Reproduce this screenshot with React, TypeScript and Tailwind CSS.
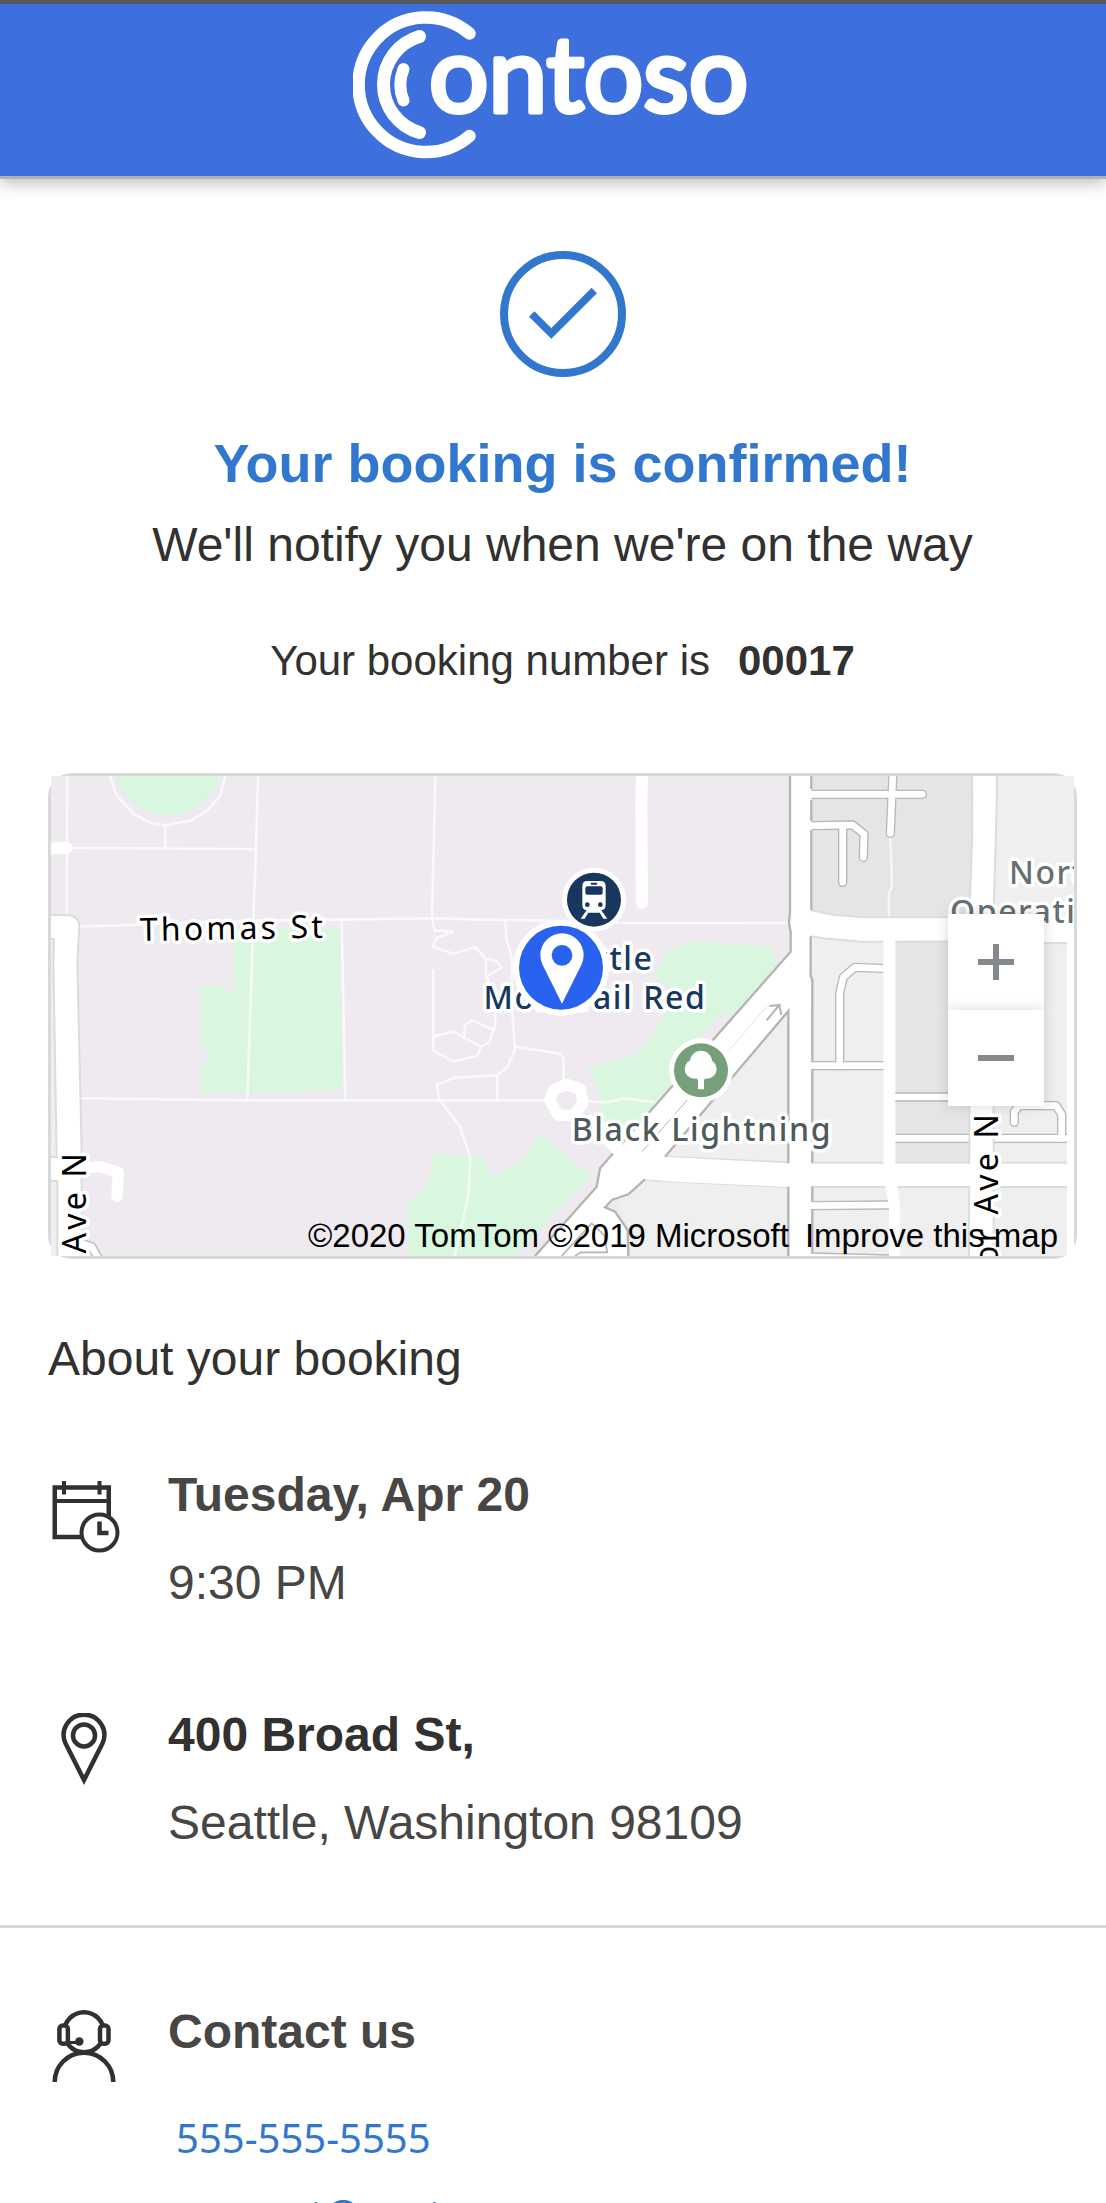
import type { ReactNode } from "react";

function Logo() {
  return (
    <svg viewBox="0 0 400 148" className="h-[148px] w-[400px]" role="img" aria-label="Contoso">
      <g fill="none" stroke="#fff" strokeLinecap="round">
        <path strokeWidth="12.5" d="M116.5 22.5A67.3 67.3 0 1 0 116.5 125" />
        <path strokeWidth="13" d="M66.5 25.500A50 50 0 0 0 66.500 121.500" />
        <path strokeWidth="12" d="M50.500 58A42 42 0 0 0 50.500 89.500" />
      </g>
      <text
        x="76"
        y="101"
        fill="#fff"
        stroke="#fff"
        strokeWidth="5"
        strokeLinejoin="round"
        className="font-['Lato',sans-serif] text-[105px] font-normal"
      >
        ontoso
      </text>
    </svg>
  );
}

function CheckIcon() {
  return (
    <svg viewBox="0 0 126 126" className="size-[126px]" fill="none" stroke="#3277ce" aria-hidden="true">
      <circle cx="63" cy="63" r="59" strokeWidth="8" />
      <path d="M31.700 63L51.300 82.500L94.300 39.500" strokeWidth="7.500" />
    </svg>
  );
}

function CalendarIcon() {
  return (
    <svg viewBox="0 0 72 72" className="size-[72px]" fill="none" stroke="#323130" strokeWidth="4.500" aria-hidden="true">
      <path d="M6.750 6.600H60.750V56H6.750Z" />
      <path d="M6.750 20H60.750" strokeWidth="4" />
      <path d="M16 0V13.500M51.500 0V13.500" strokeWidth="4" />
      <circle cx="51.500" cy="51.500" r="18" fill="#fff" strokeWidth="4" />
      <path d="M51.500 40.500V52H60.500" />
    </svg>
  );
}

function PinIcon() {
  return (
    <svg viewBox="0 0 72 72" className="size-[72px]" fill="none" stroke="#323130" strokeWidth="4.500" aria-hidden="true">
      <path d="M17.600 30.500L36 67L54.400 30.500A20.300 20.300 0 1 0 17.600 30.500Z" strokeMiterlimit="10" />
      <circle cx="36" cy="22.400" r="11" />
    </svg>
  );
}

function AgentIcon() {
  return (
    <svg viewBox="0 0 72 72" className="size-[72px]" fill="none" stroke="#323130" strokeWidth="4.500" aria-hidden="true">
      <circle cx="36" cy="22.300" r="20" />
      <rect x="11.400" y="15.500" width="8.500" height="18.300" rx="3.500" fill="#fff" />
      <rect x="52" y="15.500" width="8.500" height="18.300" rx="3.500" fill="#fff" />
      <path d="M18 32.500H31" strokeWidth="3" />
      <circle cx="31.300" cy="31.500" r="4.300" fill="#323130" stroke="none" />
      <path d="M6.700 72A29.300 29.300 0 0 1 65.300 72" />
    </svg>
  );
}

const ALLEYS = [
  "M2315 88H2647",
  "M2559 20L2551 205",
  "M2315 182L2438 180L2472 207L2470 277",
  "M2408 182V352",
  "M2545 611L2445 607L2410 637L2399 685V902",
  "M2315 902H2545",
  "M2560 996H2795",
  "M2560 1120H2795",
  "M2860 1120H3085",
  "M2923 1072V1040L2938 1022H3048L3065 1048V1120",
  "M2315 1322L2545 1320",
  "M2315 1476L2545 1482",
  "M130 1437L155 1445L178 1485",
];

const PATHS = [
  "M82 33L80 450",
  "M210 33L230 92L285 150L335 174L376 181L455 166L505 134L540 92L557 33",
  "M376 181V249",
  "M95 249L648 252",
  "M654 33L648 252L640 470L622 1006",
  "M118 485L640 467L1180 460L1300 463L1520 467L1760 474L2250 475",
  "M905 462L916 1006",
  "M118 1000L622 1006H1520",
  "M1186 33L1176 460L1184 497L1240 500L1190 518L1180 546L1240 566L1306 546L1338 582V635L1385 608L1370 588L1338 582",
  "M1338 635L1364 690L1366 780L1348 832L1322 845L1312 872L1242 890L1180 857V612",
  "M1180 815L1240 800L1322 845",
  "M1270 822L1276 780L1296 766L1362 796",
  "M1395 462L1400 525L1416 580V720L1424 845V855L1402 906L1372 931L1242 938L1190 960L1198 1004L1260 1085L1291 1178L1285 1293L1244 1473",
  "M1372 931V1006",
  "M1424 845L1560 866L1571 880V950",
  "M1630 1008L1695 1012L1755 1000L1850 1012",
];

/* Street map artwork; geometry is on a 3x grid, labels are in map pixels. */
function StreetMap() {
  return (
    <svg
      viewBox="0 0 1023 480"
      preserveAspectRatio="xMidYMid slice"
      className="block h-[480px] w-full"
      role="img"
      aria-label="Map of 400 Broad St, Seattle"
    >
      <g transform="scale(0.33333) translate(-33 -33)">
        <rect x="33" y="33" width="3072" height="1443" fill="#efeaf0" />

        <g fill="#d9f6df">
          <path d="M224 33C250 105 310 150 384 150S518 105 541 33Z" />
          <path d="M580 490H900L906 975L700 980L483 984V888H503V857H483V690H474V663H558V680H580Z" />
          <path d="M1885 555L1950 528L2200 545L2210 600L1900 960L1800 1080H1680L1677 990L1665 940L1640 912L1790 866L1862 775L1880 730L1905 680L1845 630Z" />
          <path d="M1497 1102L1652 1234L1420 1473H1104V1306L1130 1295L1160 1262L1177 1215L1172 1165L1330 1178L1356 1238L1458 1178Z" />
        </g>
        <path d="M2050 742L2070 760L2005 830L1970 855L1965 830Z" fill="#efeaf0" />

        <path d="M2250 33H3105V1476H1740V1240L2250 690Z" fill="#efefef" />
        <path d="M2315 33H2795V460H2315ZM2567 530H2790V1190H2567Z" fill="#e5e5e5" />

        <g fill="none" stroke="#fff" strokeOpacity="0.65" strokeWidth="8" strokeLinejoin="round">
          {PATHS.map((d) => (
            <path key={d} d={d} />
          ))}
          <path d="M2551 215L2556 365L2547 382V460" />
        </g>

        <path d="M33 520H42L54 1476H33Z" fill="#efefef" />
        <path
          d="M20 450H82Q118 452 118 488L112 590L125 1160V1490H52V1248H20V1176H50L40 590L42 522H20Z"
          fill="#fff"
          stroke="#d9dddc"
          strokeWidth="6"
        />
        <path d="M20 251L80 248" stroke="#fff" strokeWidth="36" strokeLinecap="round" />
        <path
          d="M90 1212L180 1205L235 1222L231 1294"
          fill="none"
          stroke="#fff"
          strokeWidth="34"
          strokeLinecap="round"
          strokeLinejoin="round"
        />
        <path d="M1806 20L1804 120L1806 414" fill="none" stroke="#fff" strokeWidth="36" strokeLinecap="round" />

        <g fill="none" strokeLinecap="round" strokeLinejoin="round">
          <g stroke="#b8b8b8" strokeWidth="28">
            {ALLEYS.map((d) => (
              <path key={d} d={d} />
            ))}
          </g>
          <g stroke="#fff" strokeWidth="20">
            {ALLEYS.map((d) => (
              <path key={d} d={d} />
            ))}
          </g>
        </g>

        {/* avenues and cross streets */}
        <g fill="#fff" stroke="#d9dddc" strokeWidth="6">
          <path d="M2796 20H2871V90L2861 430H2789L2797 200Z" />
          <path d="M2790 520H2861V1490H2787Z" />
        </g>
        <g fill="none" stroke="#d9dddc" strokeWidth="6">
          <path d="M2310 435L2380 450L2470 457L3105 458" />
          <path d="M2310 512L2350 520L2470 530L2790 529L3105 535" />
          <path d="M1880 1175L2250 1193H3105M1815 1243L1850 1247L2250 1266H3105" />
        </g>
        <path d="M2250 440L2310 438L2380 453L2470 460H3105V532L2790 526L2470 527L2350 517L2310 509H2250Z" fill="#fff" />
        <path d="M2791 435H2859V545H2791ZM2791 1180H2857V1280H2791Z" fill="#fff" />
        <path d="M1880 1178L2250 1196H3105V1263H2250L1850 1244Z" fill="#fff" />
        <path d="M2530 520H2566V1263H2572L2580 1320V1490H2547V1320L2535 1263H2530Z" fill="#fff" />
        <path d="M3081 530H3105V1476H3081Z" fill="#fff" />

        {/* diagonal arterial */}
        <path
          d="M2252 560L1680 1210L1670 1265L1485 1476H1765L1763 1395L1725 1340L1695 1327L1717 1304L1765 1288L1815 1243L1900 1250L2245 1266V1195L1875 1175L2247 738H2315V33H2252Z"
          fill="#fff"
        />
        <path d="M2248 700H2314V1476H2248Z" fill="#fff" />
        <g fill="none" stroke="#b4b4b4" strokeWidth="7">
          <path d="M2250 33V440L2247 475L2252 500V560L1680 1210L1670 1265L1485 1473" />
          <path d="M2245 1195V738L1875 1175M2245 1266V1476" />
          <path d="M1765 1473L1763 1395L1725 1340L1695 1327L1717 1304L1765 1288L1815 1243" />
          <path d="M2314 33V72M2314 104V168M2314 196V436M2312 514V632L2317 645V890M2317 914V1194M2317 1264V1308M2317 1334V1465" />
          <path d="M1565 1473L1655 1375L1692 1410L1702 1462H1622L1605 1473" strokeWidth="5" />
          <path d="M2180 766L2218 720L2188 723M2218 720L2224 750" strokeWidth="6" />
          <path d="M1806 1160L1942 1005M1742 1138L1775 1100" strokeWidth="3" />
          <path d="M2064 860L2180 725" stroke="#d4d4d4" strokeWidth="2" />
        </g>
        <path d="M1640 1060L1760 1180" stroke="#fff" strokeWidth="38" />
        <path d="M1580 958L1622 974L1629 1015L1600 1052L1555 1050L1529 1006L1540 975Z" fill="none" stroke="#fff" strokeWidth="34" strokeLinejoin="round" />
      </g>

      {/* labels */}
      <g
        stroke="#fff"
        strokeWidth="7"
        strokeLinejoin="round"
        paintOrder="stroke"
        className="font-['Noto_Sans',sans-serif] text-[32px] tracking-wider"
      >
        <g fill="#000" stroke="#fff" className="tracking-widest">
          <text x="89" y="165" transform="rotate(-1 89 165)">Thomas St</text>
          <text transform="translate(35 374) rotate(-90)" textAnchor="end">1st Ave N</text>
          <text transform="translate(947 335) rotate(-90)" textAnchor="end">Taylor Ave N</text>
        </g>
        <g className="font-medium">
          <g fill="#17375e" textAnchor="middle">
            <text x="544" y="194">Seattle</text>
            <text x="544" y="233">Monorail Red</text>
          </g>
          <text x="651" y="365" textAnchor="middle" fill="#4e5a5c">Black Lightning</text>
          <g fill="#667073">
            <text x="958" y="108">North</text>
            <text x="899" y="147">Operations</text>
          </g>
        </g>
      </g>

      {/* points of interest */}
      <g transform="scale(0.33333) translate(-33 -33)">
        <circle cx="1662" cy="404" r="96" fill="#fff" />
        <circle cx="1662" cy="404" r="81" fill="#17375e" />
        <path d="M1642 348H1682Q1697 348 1697 364V420Q1697 434 1684 436L1702 461H1690L1679 443H1645L1634 461H1622L1640 436Q1627 434 1627 420V364Q1627 348 1642 348Z" fill="#fff" />
        <rect x="1652" y="353" width="20" height="6" rx="3" fill="#17375e" />
        <rect x="1636" y="364" width="52" height="25" rx="6" fill="#17375e" />
        <circle cx="1642" cy="419" r="7" fill="#17375e" />
        <circle cx="1681" cy="419" r="7" fill="#17375e" />

        <circle cx="1983" cy="916" r="96" fill="#fff" />
        <circle cx="1983" cy="916" r="81" fill="#75a079" />
        <g fill="#fff">
          <circle cx="1983" cy="890" r="33" />
          <circle cx="1963" cy="912" r="29" />
          <circle cx="2001" cy="912" r="29" />
          <path d="M1960 930H2006L1992 945V973H1974V945Z" />
        </g>

        <circle cx="1563" cy="608" r="144" fill="#fff" />
        <circle cx="1563" cy="608" r="126" fill="#2962ef" />
        <path d="M1566 716L1508 600Q1501 586 1501 570A65 65 0 0 1 1631 570Q1631 586 1624 600Z" fill="#fff" />
        <circle cx="1566" cy="571" r="31" fill="#2962ef" />
      </g>
    </svg>
  );
}

function MapCard() {
  return (
    <section
      aria-label="Map"
      className="relative mt-[84px] w-full rounded-3xl border-[3px] border-[#d9d9d9]"
    >
      <StreetMap />
      <div className="absolute top-[138px] right-[30px] flex flex-col">
        <button
          type="button"
          aria-label="Zoom in"
          className="flex size-24 items-center justify-center bg-white shadow-[0_0_12px_rgba(0,0,0,0.16)]"
        >
          <svg viewBox="0 0 36 36" className="size-9" stroke="#85888d" strokeWidth="6">
            <path d="M18 0V36M0 18H36" />
          </svg>
        </button>
        <button
          type="button"
          aria-label="Zoom out"
          className="flex size-24 items-center justify-center bg-white shadow-[0_0_12px_rgba(0,0,0,0.16)]"
        >
          <svg viewBox="0 0 36 36" className="size-9" stroke="#85888d" strokeWidth="6">
            <path d="M0 18H36" />
          </svg>
        </button>
      </div>
      <p className="absolute right-4 bottom-0 flex gap-4 text-[33px] leading-10 whitespace-nowrap text-black">
        <span>©2020 TomTom ©2019 Microsoft</span>
        <a href="#improve-map">Improve this map</a>
      </p>
    </section>
  );
}

function Detail({ icon, lowIcon = false, children }: { icon: ReactNode; lowIcon?: boolean; children: ReactNode }) {
  return (
    <div className="flex gap-12">
      <div className={lowIcon ? "shrink-0 pt-[18px]" : "shrink-0 pt-2.5"}>{icon}</div>
      <div className="min-w-0 text-[#484644]">{children}</div>
    </div>
  );
}

export default function App() {
  return (
    <div className="h-screen overflow-x-hidden overflow-y-auto bg-white font-['Liberation_Sans',Arial,sans-serif] text-5xl leading-[64px] text-[#323130] [scrollbar-width:none]">
      <header className="flex h-44 justify-center border-t-4 border-[#55585c] bg-[#3d70dd] pt-[7px] shadow-[0_3px_0_#b2b2b4,0_6px_16px_rgba(0,0,0,0.3)]">
        <Logo />
      </header>

      <main>
        <div className="pr-[29px] pl-12">
          <section className="flex flex-col items-center pt-[75px] text-center">
            <CheckIcon />
            <h1 className="mt-[54px] text-[54px] font-bold text-[#3277ce]">Your booking is confirmed!</h1>
            <p className="mt-[18px]">We'll notify you when we're on the way</p>
            <p className="mt-14 flex gap-7 text-[42px] leading-[56px]">
              <span>Your booking number is</span>
              <strong>00017</strong>
            </p>
          </section>

          <MapCard />

          <section className="mt-[68px]">
            <h2>About your booking</h2>
            <div className="mt-[72px] flex flex-col gap-[88px]">
              <Detail icon={<CalendarIcon />} lowIcon>
                <p className="font-bold">Tuesday, Apr 20</p>
                <p className="mt-6">9:30 PM</p>
              </Detail>
              <Detail icon={<PinIcon />}>
                <p className="font-bold text-[#323130]">400 Broad St,</p>
                <p className="mt-6">Seattle, Washington 98109</p>
              </Detail>
            </div>
          </section>
        </div>

        <hr className="mt-[70px] border-t-[3px] border-[#d9d9d9]" />

        <section className="pt-[72px] pr-[29px] pb-12 pl-12">
          <Detail icon={<AgentIcon />}>
            <h2 className="font-bold">Contact us</h2>
            <address className="mt-11 flex flex-col gap-4 pl-2 font-['Noto_Sans',sans-serif] text-[40px] leading-[60px] text-[#3277ce] not-italic">
              <a href="tel:555-555-5555">555-555-5555</a>
              <a href="mailto:support@contoso.com">support@contoso.com</a>
            </address>
          </Detail>
        </section>
      </main>
    </div>
  );
}
